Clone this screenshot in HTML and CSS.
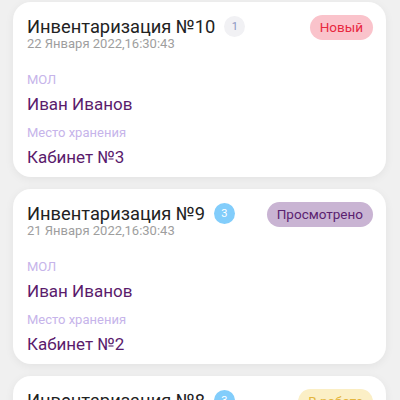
FILE: index.html
```html
<!DOCTYPE html>
<html lang="ru">
<head>
  <meta charset="UTF-8">
  <title>Инвентаризации</title>
  <link rel="stylesheet" href="styles.css">
</head>
<body>

  <!-- Inventory list -->
  <div class="list">

    <div class="card">
      <div class="card-head">
        <div class="card-title">
          <h3>Инвентаризация №10</h3>
          <span class="count">1</span>
        </div>
        <span class="status status-new">Новый</span>
      </div>
      <div class="date">22 Января 2022,16:30:43</div>
      <div class="label label-first">МОЛ</div>
      <div class="value">Иван Иванов</div>
      <div class="label">Место хранения</div>
      <div class="value">Кабинет №3</div>
    </div>

    <div class="card">
      <div class="card-head">
        <div class="card-title">
          <h3>Инвентаризация №9</h3>
          <span class="count count-active">3</span>
        </div>
        <span class="status status-seen">Просмотрено</span>
      </div>
      <div class="date">21 Января 2022,16:30:43</div>
      <div class="label label-first">МОЛ</div>
      <div class="value">Иван Иванов</div>
      <div class="label">Место хранения</div>
      <div class="value">Кабинет №2</div>
    </div>

    <div class="card">
      <div class="card-head">
        <div class="card-title">
          <h3>Инвентаризация №8</h3>
          <span class="count count-active">3</span>
        </div>
        <span class="status status-work">В работе</span>
      </div>
      <div class="date">20 Января 2022,16:30:43</div>
      <div class="label label-first">МОЛ</div>
      <div class="value">Иван Иванов</div>
      <div class="label">Место хранения</div>
      <div class="value">Кабинет №1</div>
    </div>

  </div>

</body>
</html>
```

FILE: styles.css
```css
body {
  font-family: Roboto, "Noto Sans", sans-serif;
  background: #f0f0f0;
  margin: 0;
  padding: 0;
  height: 400px;
  overflow: hidden;
}

.list {
  display: flex;
  flex-direction: column;
  gap: 12px;
  padding: 2px 14px 0 13px;
}

/* Card */
.card {
  background: #ffffff;
  border-radius: 18px;
  padding: 13px 13px 9px 14px;
  box-shadow: 0 2px 10px rgba(0, 0, 0, 0.06);
}

.card-head {
  display: flex;
  justify-content: space-between;
  align-items: flex-start;
}

.card-title {
  display: flex;
  align-items: center;
  gap: 9px;
  margin-top: 2px;
}

.card-title h3 {
  margin: 0;
  font-size: 18.3px;
  font-weight: 400;
  line-height: 20px;
  color: #222222;
}

.count {
  width: 21px;
  height: 21px;
  border-radius: 50%;
  background: #f1f1f4;
  color: #8b95c2;
  font-size: 11px;
  display: flex;
  align-items: center;
  justify-content: center;
  margin-top: -2px;
}

.count-active {
  background: #82cdfb;
  color: #ffffff;
}

.status {
  height: 25px;
  padding: 0 10px;
  border-radius: 13px;
  font-size: 13.5px;
  line-height: 25px;
}

.status-new {
  background: #fac3cb;
  color: #e8283f;
}

.status-seen {
  background: #c9b4d3;
  color: #5b2270;
}

.status-work {
  background: #fbefc6;
  color: #e4b53c;
}

.date {
  font-size: 13px;
  line-height: 14px;
  color: #9e9e9e;
  margin-top: -3px;
}

.label {
  font-size: 13px;
  line-height: 16px;
  color: #c6b4ea;
  margin-top: 10px;
}

.label-first {
  margin-top: 21px;
}

.value {
  font-size: 17px;
  line-height: 22px;
  color: #5a1b6c;
  margin-top: 5px;
}
```
